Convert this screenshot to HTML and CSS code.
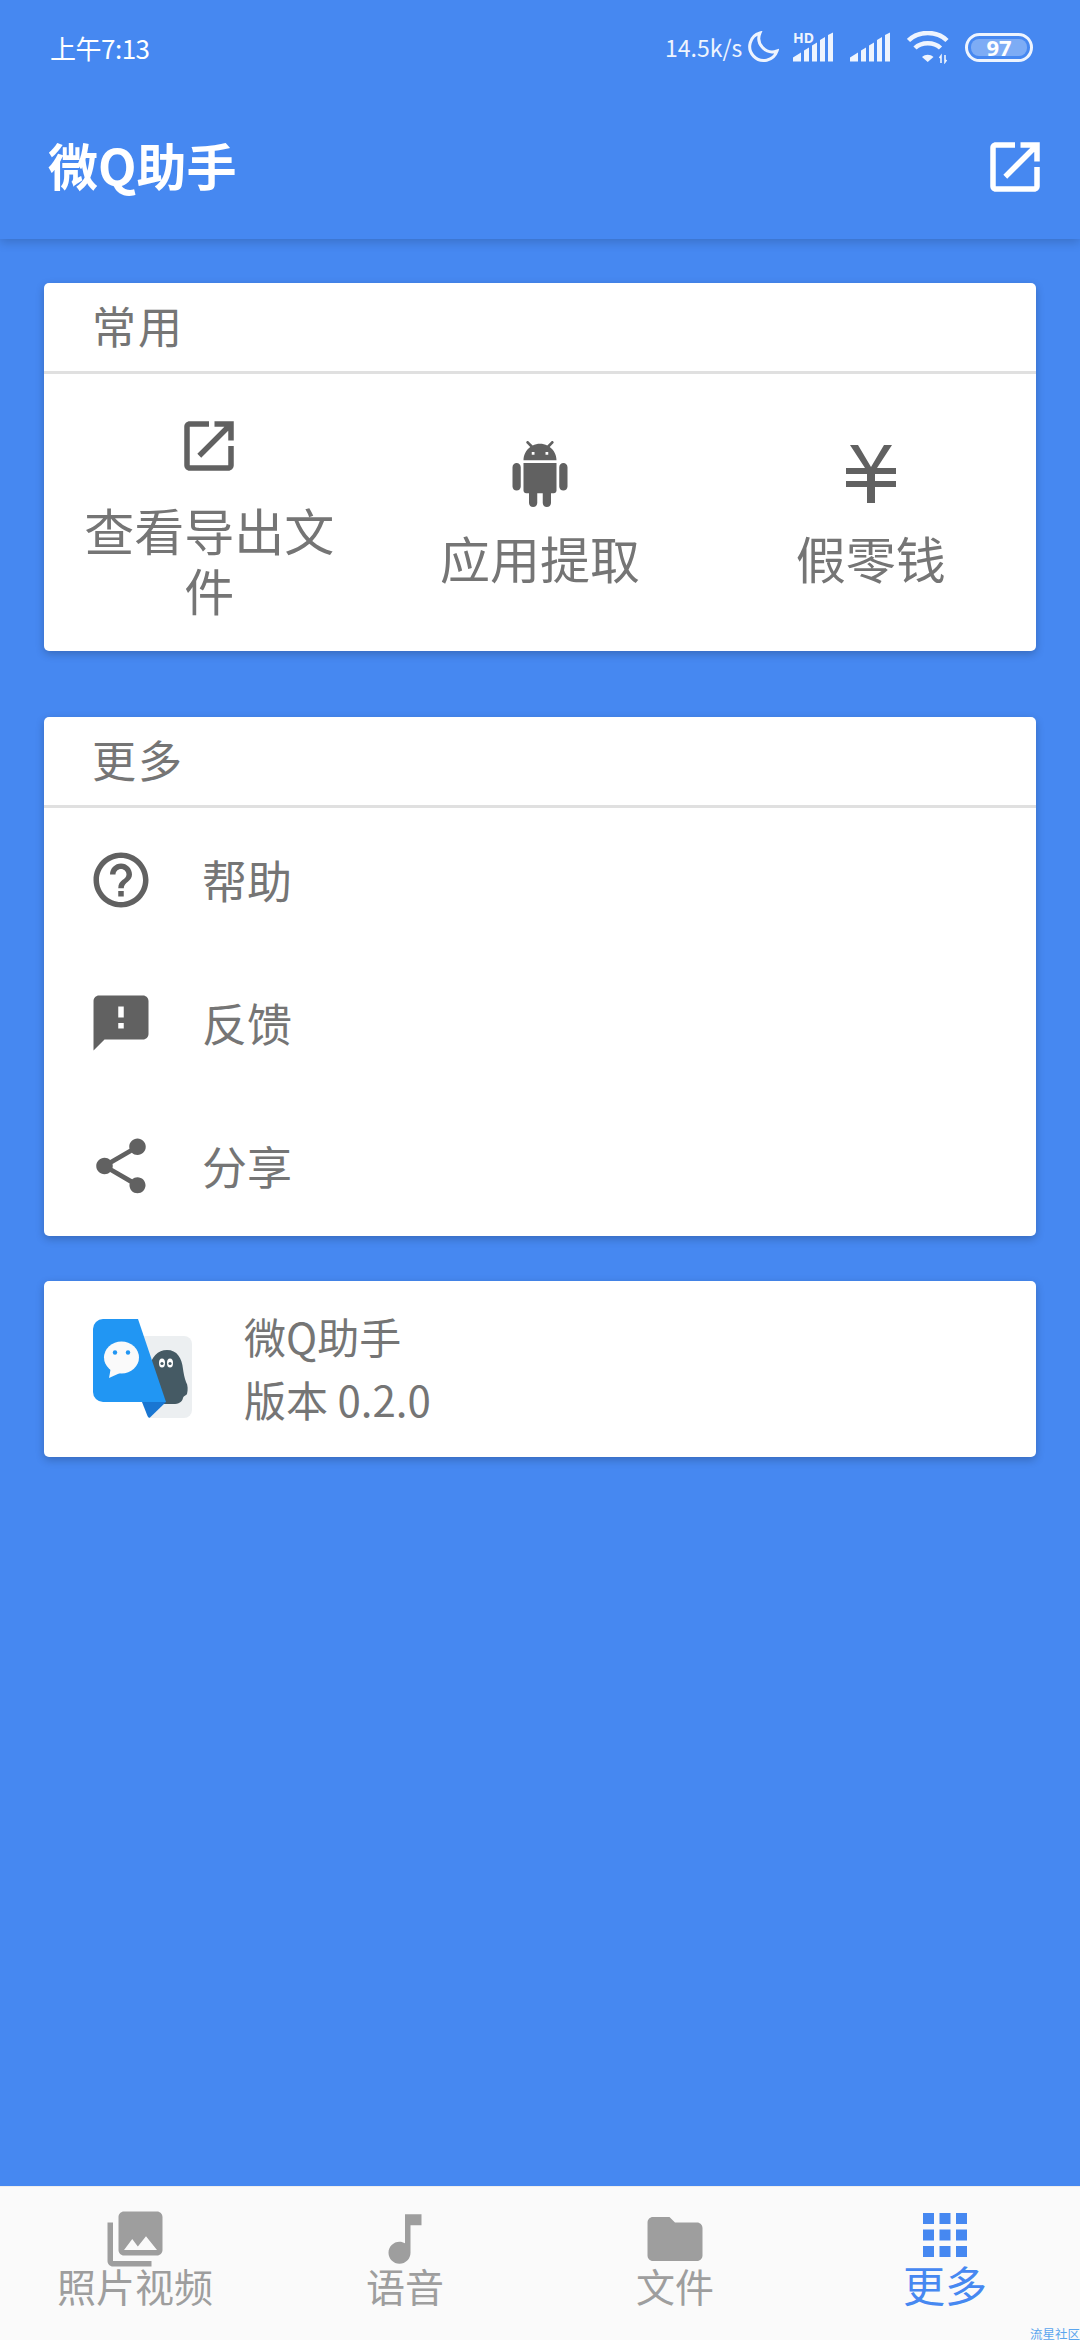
FILE: index.html
```html
<!DOCTYPE html>
<html lang="zh-CN">
<head>
    <meta charset="UTF-8">
    <meta name="viewport" content="width=device-width, initial-scale=1.0">
    <title>微Q助手</title>
    <link rel="stylesheet" href="styles.css">
</head>
<body>
    <header class="appbar">
        <div class="status-bar">
            <span class="status-time">上午7:13</span>
            <div class="status-icons">
                <span class="status-speed">14.5k/s</span>
                <svg class="moon" viewBox="0 0 32 32"><path d="M13 2A14 14 0 1 0 30 20A13.5 13.5 0 0 1 13 2z"/></svg>
                <div class="signal-hd">
                    <span class="signal-hd-text">HD</span>
                    <svg class="signal" viewBox="0 0 41 30">
                        <path d="M0 29.500V25.500L8 20.500V29.500zM11 29.500V18.500L16 15.500V29.500zM19 29.500V13.500L24 10.500V29.500zM27 29.500V8L32 5V29.500zM35 29.500V3L40 0.500V29.500z"/>
                    </svg>
                </div>
                <svg class="signal" viewBox="0 0 41 30">
                    <path d="M0 29.500V25.500L8 20.500V29.500zM11 29.500V18.500L16 15.500V29.500zM19 29.500V13.500L24 10.500V29.500zM27 29.500V8L32 5V29.500zM35 29.500V3L40 0.500V29.500z"/>
                </svg>
                <svg class="wifi" viewBox="0 0 42 33">
                    <path class="wifi-arc" d="M1.500 9.500C11.500 -0.500 30 -0.500 40 9.500"/>
                    <path class="wifi-arc" d="M8 17C14.500 10.500 27 10.500 33.500 17"/>
                    <path class="wifi-dot" d="M15 26C18.500 23 23 23 26.500 26L20.700 31z"/>
                    <path class="wifi-arrow" d="M34 32V25L32.500 27M38 24V31L39.500 29"/>
                </svg>
                <div class="battery"><span>97</span></div>
            </div>
        </div>
        <div class="toolbar">
            <h1 class="toolbar-title">微Q助手</h1>
            <svg class="icon icon-white" viewBox="0 0 24 24"><path d="M19 19H5V5h7V3H5c-1.110 0-2 .9-2 2v14c0 1.100.89 2 2 2h14c1.100 0 2-.9 2-2v-7h-2v7zM14 3v2h3.590l-9.830 9.830 1.410 1.410L19 6.410V10h2V3h-7z"/></svg>
        </div>
    </header>

    <main class="content">
        <section class="card card-common">
            <h2 class="card-header">常用</h2>
            <div class="shortcuts">
                <div class="shortcut">
                    <svg class="icon" viewBox="0 0 24 24"><path d="M19 19H5V5h7V3H5c-1.110 0-2 .9-2 2v14c0 1.100.89 2 2 2h14c1.100 0 2-.9 2-2v-7h-2v7zM14 3v2h3.590l-9.830 9.830 1.410 1.410L19 6.410V10h2V3h-7z"/></svg>
                    <span class="shortcut-label">查看导出文件</span>
                </div>
                <div class="shortcut shortcut-single">
                    <svg class="icon" viewBox="0 0 24 24"><path d="M6 18c0 .55.45 1 1 1h1v3.500c0 .83.67 1.500 1.500 1.500s1.500-.67 1.500-1.500V19h2v3.500c0 .83.67 1.500 1.500 1.500s1.500-.67 1.500-1.500V19h1c.55 0 1-.45 1-1V8H6v10zM3.500 8C2.670 8 2 8.670 2 9.500v7c0 .83.67 1.500 1.500 1.500S5 17.330 5 16.500v-7C5 8.670 4.330 8 3.500 8zm17 0c-.83 0-1.500.67-1.500 1.500v7c0 .83.67 1.500 1.500 1.500s1.500-.67 1.500-1.500v-7c0-.83-.67-1.500-1.500-1.500zm-4.970-5.840l1.300-1.300c.2-.2.2-.51 0-.71-.2-.2-.51-.2-.71 0l-1.480 1.480C13.850 1.230 12.950 1 12 1c-.96 0-1.860.23-2.660.63L7.850.15c-.2-.2-.51-.2-.71 0-.2.2-.2.51 0 .71l1.310 1.310C6.970 3.260 6 5.010 6 7h12c0-1.990-.97-3.750-2.470-4.840zM10 5H9V4h1v1zm5 0h-1V4h1v1z"/></svg>
                    <span class="shortcut-label">应用提取</span>
                </div>
                <div class="shortcut shortcut-single">
                    <svg class="icon" viewBox="0 0 66 66"><path d="M12 4H20L33 26L46 4H54L39 27H58V33H37V40H58V46H37V62H29V46H8V40H29V33H8V27H27z"/></svg>
                    <span class="shortcut-label">假零钱</span>
                </div>
            </div>
        </section>

        <section class="card card-more">
            <h2 class="card-header">更多</h2>
            <ul class="menu">
                <li class="menu-row">
                    <svg class="icon" viewBox="0 0 24 24"><path d="M11 18h2v-2h-2v2zm1-16C6.480 2 2 6.480 2 12s4.480 10 10 10 10-4.480 10-10S17.520 2 12 2zm0 18c-4.410 0-8-3.590-8-8s3.590-8 8-8 8 3.590 8 8-3.590 8-8 8zm0-14c-2.210 0-4 1.790-4 4h2c0-1.100.9-2 2-2s2 .9 2 2c0 2-3 1.750-3 5h2c0-2.250 3-2.500 3-5 0-2.210-1.790-4-4-4z"/></svg>
                    <span>帮助</span>
                </li>
                <li class="menu-row">
                    <svg class="icon" viewBox="0 0 24 24"><path d="M20 2H4c-1.100 0-1.990.9-1.990 2L2 22l4-4h14c1.100 0 2-.9 2-2V4c0-1.100-.9-2-2-2zm-7 12h-2v-2h2v2zm0-4h-2V6h2v4z"/></svg>
                    <span>反馈</span>
                </li>
                <li class="menu-row">
                    <svg class="icon" viewBox="0 0 24 24"><path d="M18 16.080c-.76 0-1.440.3-1.960.77L8.910 12.700c.05-.23.09-.46.09-.7s-.04-.47-.09-.7l7.050-4.110c.54.5 1.250.81 2.040.81 1.660 0 3-1.340 3-3s-1.340-3-3-3-3 1.340-3 3c0 .24.04.47.09.7L8.040 9.810C7.500 9.310 6.790 9 6 9c-1.660 0-3 1.340-3 3s1.340 3 3 3c.79 0 1.500-.31 2.040-.81l7.120 4.160c-.05.21-.08.43-.08.65 0 1.610 1.310 2.920 2.920 2.920 1.610 0 2.920-1.310 2.920-2.920s-1.310-2.920-2.920-2.920z"/></svg>
                    <span>分享</span>
                </li>
            </ul>
        </section>

        <section class="card card-about">
            <svg class="logo" viewBox="0 0 100 100">
                <path fill="#eceff1" d="M45 17H91a8 8 0 0 1 8 8V91a8 8 0 0 1-8 8H56L49 83z"/>
                <path fill="#455a64" d="M56 50C58 38 65 31 74 31C84 31 89 39 90 50C91 57 92 60 93 63C95 66 95 71 94 75C93 77 91 76 90 79C89 83 86 85 80 85H70z"/>
                <ellipse fill="#fff" cx="69" cy="44" rx="3" ry="4.500"/>
                <ellipse fill="#fff" cx="77" cy="44" rx="3" ry="4.500"/>
                <circle fill="#455a64" cx="69" cy="44.500" r="1.600"/>
                <circle fill="#455a64" cx="77" cy="44.500" r="1.600"/>
                <path fill="#1976d2" d="M49 83H73L57 98.500Q55.500 99.500 54.500 97z"/>
                <path fill="#2196f3" d="M10 0H45L73 83H10A10 10 0 0 1 0 73V10A10 10 0 0 1 10 0z"/>
                <ellipse fill="#fafafa" cx="28.500" cy="38.500" rx="17.500" ry="16"/>
                <path fill="#fafafa" d="M16 59L18 48L27 54z"/>
                <circle fill="#2196f3" cx="22" cy="33.500" r="2.200"/>
                <circle fill="#2196f3" cx="35" cy="33.500" r="2.200"/>
            </svg>
            <div class="about-text">
                <span>微Q助手</span>
                <span>版本 0.2.0</span>
            </div>
        </section>
    </main>

    <nav class="bottom-nav">
        <div class="nav-item">
            <svg class="icon" viewBox="0 0 24 24"><path d="M22 16V4c0-1.100-.9-2-2-2H8c-1.100 0-2 .9-2 2v12c0 1.100.9 2 2 2h12c1.100 0 2-.9 2-2zm-11-4l2.030 2.710L16 11l4 5H8l3-4zM2 6v14c0 1.100.9 2 2 2h14v-2H4V6H2z"/></svg>
            <span>照片视频</span>
        </div>
        <div class="nav-item">
            <svg class="icon" viewBox="0 0 24 24"><path d="M12 3v10.550c-.59-.34-1.270-.55-2-.55-2.210 0-4 1.790-4 4s1.790 4 4 4 4-1.790 4-4V7h4V3h-6z"/></svg>
            <span>语音</span>
        </div>
        <div class="nav-item">
            <svg class="icon" viewBox="0 0 24 24"><path d="M10 4H4c-1.100 0-1.990.9-1.990 2L2 18c0 1.100.9 2 2 2h16c1.100 0 2-.9 2-2V8c0-1.100-.9-2-2-2h-8l-2-2z"/></svg>
            <span>文件</span>
        </div>
        <div class="nav-item nav-item-active">
            <svg class="icon" viewBox="0 0 24 24"><path d="M4 8h4V4H4v4zm6 12h4v-4h-4v4zm-6 0h4v-4H4v4zm0-6h4v-4H4v4zm6 0h4v-4h-4v4zm6-10v4h4V4h-4zm-6 4h4V4h-4v4zm6 6h4v-4h-4v4zm0 6h4v-4h-4v4z"/></svg>
            <span>更多</span>
        </div>
        <span class="watermark">流星社区</span>
    </nav>
</body>
</html>
```

FILE: styles.css
```css
* {
    box-sizing: border-box;
}

body {
    margin: 0;
    width: 1080px;
    height: 2340px;
    display: flex;
    flex-direction: column;
    overflow: hidden;
    font-family: "Noto Sans CJK SC", "Noto Sans", sans-serif;
    background-color: #4688f1;
    color: #757575;
}

.icon {
    width: 66px;
    height: 66px;
    flex: none;
    fill: #616161;
}

.icon-white {
    fill: #fff;
}

/* App bar */
.appbar {
    height: 239px;
    flex: none;
    background-color: #4688f1;
    box-shadow: 0 3px 10px rgba(0, 0, 0, 0.18);
    color: #fff;
}

.status-bar {
    height: 94px;
    padding: 0 47px 0 50px;
    display: flex;
    align-items: center;
    justify-content: space-between;
}

.status-time {
    font-size: 26px;
    letter-spacing: -0.5px;
}

.status-icons {
    display: flex;
    align-items: center;
}

.status-speed {
    width: 82px;
    font-size: 23px;
    color: #eef4fe;
}

.moon {
    width: 32px;
    height: 32px;
    margin-right: 14px;
    fill: none;
    stroke: #eef4fe;
    stroke-width: 3;
}

.signal {
    display: block;
    width: 41px;
    height: 30px;
    margin-right: 16px;
    fill: #eef4fe;
}

.signal-hd {
    position: relative;
}

.signal-hd-text {
    position: absolute;
    top: -3px;
    left: 0;
    font-family: "Noto Sans", sans-serif;
    font-size: 14px;
    font-weight: 700;
    line-height: 18px;
    color: #eef4fe;
}

.wifi {
    width: 42px;
    height: 33px;
    margin-right: 16px;
}

.wifi-arc {
    fill: none;
    stroke: #eef4fe;
    stroke-width: 4.5;
}

.wifi-dot {
    fill: #eef4fe;
}

.wifi-arrow {
    fill: none;
    stroke: #eef4fe;
    stroke-width: 1.6;
}

.battery {
    width: 68px;
    height: 29px;
    padding: 3px;
    border: 3px solid #eef4fe;
    border-radius: 15px;
    display: flex;
}

.battery span {
    flex: 1;
    border-radius: 8px;
    background-color: rgba(255, 255, 255, 0.3);
    font-family: "Noto Sans", sans-serif;
    font-size: 22px;
    font-weight: 700;
    line-height: 17px;
    text-align: center;
}

.toolbar {
    height: 145px;
    padding: 0 32px 0 48px;
    display: flex;
    align-items: center;
    justify-content: space-between;
}

.toolbar-title {
    margin: 0 0 5px;
    font-size: 50px;
    font-weight: 700;
}

/* Cards */
.content {
    flex: 1;
    padding: 44px 44px 0;
}

.card {
    background-color: #fff;
    border-radius: 5px;
    box-shadow: 0 3px 8px rgba(0, 0, 0, 0.22);
}

.card-common {
    height: 368px;
    margin-bottom: 66px;
}

.card-more {
    height: 519px;
    margin-bottom: 45px;
}

.card-about {
    height: 176px;
    padding: 0 49px;
    display: flex;
    align-items: center;
    gap: 51px;
}

.card-header {
    height: 91px;
    margin: 0;
    padding-left: 48px;
    border-bottom: 3px solid #e0e0e0;
    font-size: 44px;
    font-weight: 400;
    letter-spacing: 2px;
    line-height: 84px;
}

.shortcuts {
    padding: 39px 0 28px;
    display: grid;
    grid-template-columns: repeat(3, 1fr);
    align-items: center;
}

.shortcut {
    padding: 0 38px;
    display: flex;
    flex-direction: column;
    align-items: center;
    gap: 20px;
    text-align: center;
}

.shortcut-single {
    padding-bottom: 4px;
}

.shortcut-label {
    font-size: 50px;
    line-height: 60px;
}

.menu {
    margin: 0;
    padding: 0 0 0 44px;
    list-style: none;
}

.menu-row {
    height: 143px;
    display: flex;
    align-items: center;
    gap: 48px;
    font-size: 45px;
}

.logo {
    width: 100px;
    height: 100px;
    flex: none;
}

.about-text {
    margin-bottom: 5px;
    display: flex;
    flex-direction: column;
    font-size: 42px;
    line-height: 63px;
}

/* Bottom navigation */
.bottom-nav {
    position: relative;
    height: 154px;
    flex: none;
    display: grid;
    grid-template-columns: repeat(4, 1fr);
    background-color: #fafafa;
    border-top: 1px solid #eeeeee;
}

.nav-item {
    padding-top: 19px;
    display: flex;
    flex-direction: column;
    align-items: center;
    font-size: 39px;
    line-height: 26px;
    color: #9e9e9e;
}

.nav-item .icon {
    fill: #9e9e9e;
}

.nav-item-active {
    padding-top: 15px;
    font-size: 42px;
    line-height: 32px;
    color: #4688f1;
}

.nav-item-active .icon {
    fill: #4688f1;
}

.watermark {
    position: absolute;
    right: 0;
    bottom: 0;
    font-size: 12.5px;
    line-height: 13px;
    color: #5aa5ee;
}
```
